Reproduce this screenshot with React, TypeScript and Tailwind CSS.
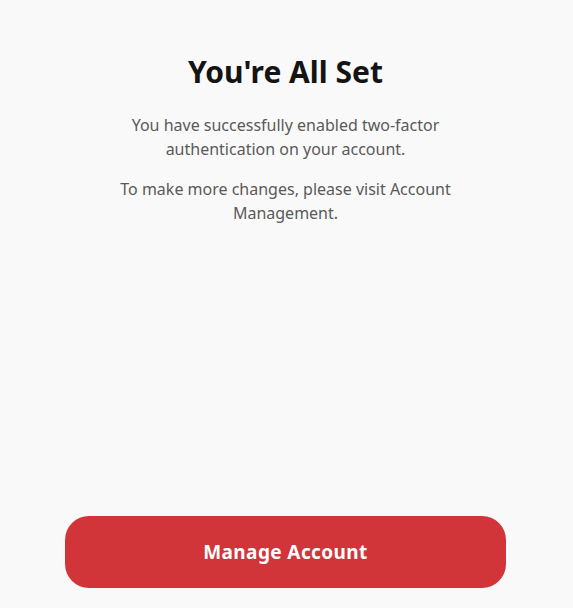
const App = () => {
  return (
    <div
      className="flex h-[608px] flex-col bg-[#f9f9f9] pl-[65px] pr-[67px] pt-[53px] pb-[20px]"
      style={{ fontFamily: "'Noto Sans', 'Open Sans', sans-serif" }}
    >
      <div className="flex flex-col items-center text-center">
        <h1 className="text-[30px] font-bold leading-[38px] text-[#141414]">
          You're All Set
        </h1>
        <p className="mt-[22px] max-w-[360px] text-[16px] leading-[24px] text-[#5a5a5a]">
          You have successfully enabled two-factor authentication on your account.
        </p>
        <p className="mt-[16px] max-w-[360px] text-[16px] leading-[24px] text-[#5a5a5a]">
          To make more changes, please visit Account Management.
        </p>
      </div>
      <div className="mt-auto">
        <button className="h-[72px] w-full rounded-[24px] bg-[#d13539] text-[19px] font-bold tracking-[0.4px] text-white">
          Manage Account
        </button>
      </div>
    </div>
  );
};

export default App;
